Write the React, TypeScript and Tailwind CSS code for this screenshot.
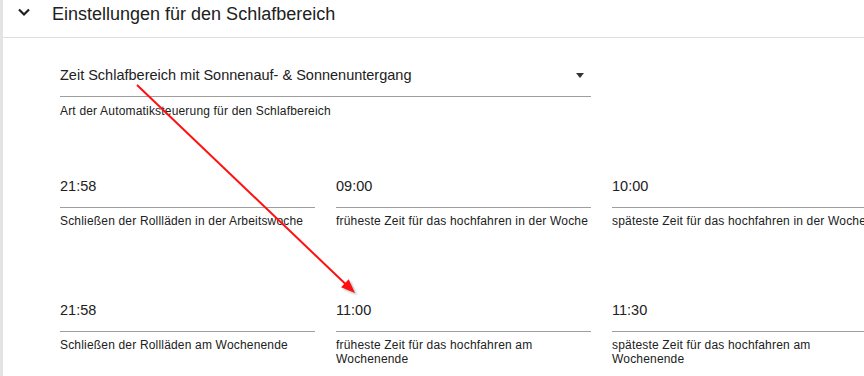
import React from "react";

type Field = { value: string; label: string };

const rows: Field[][] = [
  [
    { value: "21:58", label: "Schließen der Rollläden in der Arbeitswoche" },
    { value: "09:00", label: "früheste Zeit für das hochfahren in der Woche" },
    { value: "10:00", label: "späteste Zeit für das hochfahren in der Woche" },
  ],
  [
    { value: "21:58", label: "Schließen der Rollläden am Wochenende" },
    { value: "11:00", label: "früheste Zeit für das hochfahren am Wochenende" },
    { value: "11:30", label: "späteste Zeit für das hochfahren am Wochenende" },
  ],
];

function TimeField({ f }: { f: Field }) {
  return (
    <div className="flex flex-col">
      <div className="pb-[11px] border-b border-[#9e9e9e] text-[14.5px] leading-[20px] text-[#212121]">
        {f.value}
      </div>
      <div className="mt-[7px] text-[12px] leading-[13.5px] tracking-[0.18px] text-[#212121]">
        {f.label}
      </div>
    </div>
  );
}

export default function App() {
  return (
    <div className="relative w-[864px] h-[376px] overflow-hidden bg-white font-['Liberation_Sans',Arial,sans-serif] text-[#212121]">
      <div className="h-full border-l-[3px] border-[#e3e3e3] flex flex-col">
        <div className="h-[38px] shrink-0 border-b border-[#e0e0e0] flex items-start">
          <svg width="24" height="24" viewBox="0 0 24 24" className="ml-[9px] shrink-0">
            <path d="M7 9.5 L12 14.5 L17 9.5" stroke="#212121" strokeWidth="2.2" fill="none" />
          </svg>
          <div className="ml-[16px] pt-[2px] text-[18px] leading-[24px] whitespace-nowrap">
            Einstellungen für den Schlafbereich
          </div>
        </div>
        <div className="pl-[57px] pt-[27px]">
          <div className="w-[531px] flex items-center justify-between pb-[11px] border-b border-[#9e9e9e]">
            <span className="text-[14.5px] leading-[20px] whitespace-nowrap">
              Zeit Schlafbereich mit Sonnenauf- &amp; Sonnenuntergang
            </span>
            <svg width="8" height="5" viewBox="0 0 8 5" className="mr-[7px] shrink-0">
              <polygon points="0,0 8,0 4,5" fill="#333" />
            </svg>
          </div>
          <div className="mt-[7px] text-[12px] leading-[14px] tracking-[0.18px] whitespace-nowrap">
            Art der Automatiksteuerung für den Schlafbereich
          </div>
          <div className="mt-[58px] grid grid-cols-[255px_255px_255px] gap-x-[21px] gap-y-[71.5px]">
            {rows.flat().map((f, i) => (
              <TimeField key={i} f={f} />
            ))}
          </div>
        </div>
      </div>
      <svg
        className="absolute inset-0 pointer-events-none"
        width="864"
        height="376"
        viewBox="0 0 864 376"
      >
        <defs>
          <filter id="sh" x="-50%" y="-50%" width="200%" height="200%">
            <feGaussianBlur stdDeviation="1.2" />
          </filter>
        </defs>
        <polygon
          points="357,295 343.07,289.32 350.67,281.36"
          fill="#000"
          opacity="0.25"
          filter="url(#sh)"
        />
        <line x1="137" y1="85" x2="345.5" y2="284" stroke="#ff1010" strokeWidth="2" />
        <polygon points="355,293 341.07,287.32 348.67,279.36" fill="#ff1010" />
      </svg>
    </div>
  );
}
